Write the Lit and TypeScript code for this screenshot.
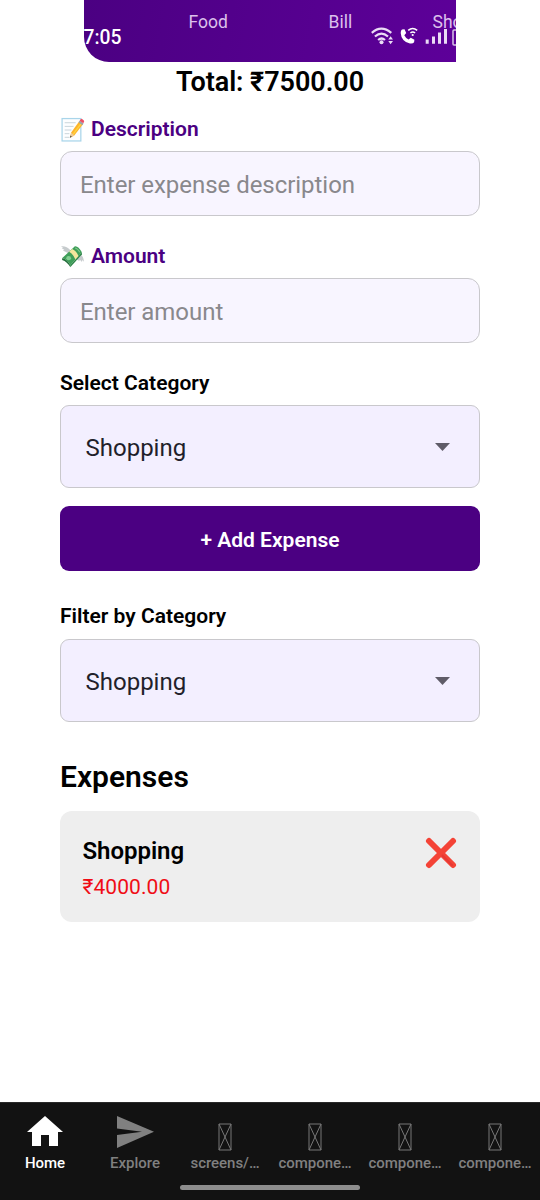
import { LitElement, html, css } from "lit";
import { customElement, property } from "lit/decorators.js";

const memoIcon = html`
  <svg class="emoji" viewBox="0 0 24 24">
    <rect x="2" y="1.500" width="18" height="21.500" fill="#fdfeff" stroke="#a9d5ea" stroke-width="1.200"/>
    <path d="M4.500 5.500h10.500M4.500 9h8.500M4.500 12.500h6.500M4.500 16h4.500M4.500 19.500h4.500" stroke="#c5d2d8" stroke-width=".9"/>
    <path d="M9.500 19.800l1.200-5L18.500 4l3.700 2.700-8.700 11.300z" fill="#fdb32b"/>
    <path d="M12 16.200L20.200 5.200l1.100.8-8.300 11z" fill="#ffd43f"/>
    <path d="M9.500 19.800l1.200-5 3 2.900z" fill="#efcb9a"/>
    <path d="M9.500 19.800l.5-2 1.400 1.100z" fill="#444"/>
    <path d="M17.700 5.100l1.200-1.600 3.700 2.700-1.200 1.700z" fill="#9aa5ad"/>
    <path d="M18.800 3.500l.9-1.200q.8-.9 1.800-.2l1.200.9q.9.900.3 1.800l-.7 1.300z" fill="#ef5065"/>
  </svg>`;

const moneyIcon = html`
  <svg class="emoji" viewBox="0 0 24 24">
    <path d="M10 6Q6 1.500 1 2.300l2.200 1.500-1.600.5 2.600 1.200-1.400.8L8.500 9zM16 12l3.500-1.800q3 1.500 3.500 6.800l-1.700-1.600-.2 2-2-2.300-.7 1.200L14.500 14z" fill="#c6cbcd"/>
    <path d="M2.200 13.500L14.300 2.200q3.300-.5 6.700 5.800L9.800 20.400Q7.200 15 2.200 13.500z" fill="#3f9f59"/>
    <path d="M2.200 13.500Q7.200 15 9.800 20.400v1.800Q7 17 2 15.300z" fill="#23703b"/>
    <path d="M9.800 20.400L21 8v2L9.800 22.200z" fill="#2c8446"/>
    <path d="M8.700 7.500l3-2.800q4.300 2 6 6.900l-2.900 3.200Q12.600 9.500 8.700 7.500z" fill="#f4e59c"/>
    <ellipse cx="8.300" cy="13.600" rx="2.300" ry="2" fill="#83cf91"/>
    <path d="M14.500 3.800q2.600.4 4.500 4.200" stroke="#7fc58b" fill="none"/>
  </svg>`;

const homeIcon = html`
  <svg class="home" viewBox="0 0 36 30"><path d="M18 0L0 16h5v14h9V19h8v11h9V16h5z" fill="#fff"/></svg>`;
const sendIcon = html`
  <svg class="send" viewBox="0 0 37 32"><path d="M0 0l37 15.800L0 32V19l25-3.200L0 12.500z" fill="#808080"/></svg>`;
const missingIcon = html`
  <svg class="missing" viewBox="0 0 14 28"><path d="M1 1h12v26H1zL13 27M13 1L1 27" fill="none" stroke="#777" stroke-width="1"/></svg>`;

@customElement("status-header")
class StatusHeader extends LitElement {
  static styles = css`
    :host { display: block; width: 372px; height: 62px; margin: 0 auto; }
    .bar {
      position: relative; height: 62px; overflow: hidden;
      border-bottom-left-radius: 25px;
      background: linear-gradient(100deg, #4b0082, #5d0099);
      color: #fff;
    }
    .axis { position: absolute; top: 11px; font-size: 17.5px; line-height: 22px; color: #dcc0ec; white-space: nowrap; }
    .food { left: 104.5px; }
    .bill { left: 244.5px; }
    .shop { left: 348.5px; }
    .clock { position: absolute; left: -0.5px; top: 26px; font-size: 19.3px; line-height: 24px; font-weight: 500; }
    .signals { position: absolute; left: 286px; top: 25px; width: 86px; height: 22px; }
  `;
  render() {
    return html`
      <div class="bar">
        <span class="axis food">Food</span>
        <span class="axis bill">Bill</span>
        <span class="axis shop">Sho</span>
        <span class="clock">7:05</span>
        <svg class="signals" viewBox="0 0 86 22">
          <g fill="none" stroke="#eadcf5" stroke-width="2.200">
            <path d="M1.800 7.800q9.500-8.300 19.500 0M4.900 11.500q6.600-5.800 13.100 0M8.100 15q3.500-3 6.900 0"/>
          </g>
          <circle cx="11.500" cy="17.300" r="2" fill="#eadcf5"/>
          <path d="M18.300 14.500l2.300-3.200 2.400 3.200zM18.300 16l2.300 3.200 2.400-3.200z" fill="#eadcf5"/>
          <path d="M32 4.500l2.500-.3 1.700 3.900-1.900 2.200q1.400 3 4.300 4.300l2.200-1.800 3.600 1.900-.3 2.500q-1.200 1.800-4.200 1.300Q31.300 16.500 30.700 8q0-2.800 1.300-3.500z" fill="#fff"/>
          <path d="M38.200 5.300q4.500-3.600 9 0M40.400 8q2.400-2 4.700 0" fill="none" stroke="#fff" stroke-width="1.500"/>
          <circle cx="42.700" cy="10" r="1.100" fill="#fff"/>
          <path d="M55.700 14.500h3v4.200h-3zM62 11.500h3v7.200h-3zM68 7.500h3v11.200h-3zM74 4h3v14.700h-3z" fill="#eadcf5"/>
          <path d="M86 5h-2q-1 0-1 1v13q0 1 1 1h2" fill="none" stroke="#d9c4e8" stroke-width="1.500"/>
        </svg>
      </div>`;
  }
}

@customElement("category-select")
class CategorySelect extends LitElement {
  @property() value = "";
  static styles = css`
    .box {
      box-sizing: border-box; height: 83px; padding: 2px 29px 0 24.5px;
      display: flex; align-items: center; justify-content: space-between;
      border: 1px solid #c9c8cc; border-radius: 9px; background: #f3efff;
      color: #221f2b; font-size: 24px;
    }
    :host { display: block; }
    .arrow { width: 15px; height: 8px; margin-top: -2px; }
  `;
  render() {
    return html`
      <div class="box">
        <span>${this.value}</span>
        <svg class="arrow" viewBox="0 0 15 8"><path d="M0 0h15L7.500 8z" fill="#5f5c68"/></svg>
      </div>`;
  }
}

@customElement("tab-bar")
class TabBar extends LitElement {
  static styles = css`
    :host { display: block; }
    .bar { position: relative; height: 98px; box-sizing: border-box; border-top: 1px solid #292929; background: #121212; }
    .tabs { display: grid; grid-template-columns: repeat(6, 90px); }
    .tab { display: flex; flex-direction: column; align-items: center; color: #808080; font-size: 15px; font-weight: 500; letter-spacing: -0.03px; }
    .active { color: #fff; }
    .icon { height: 50px; display: flex; align-items: flex-start; }
    .label { line-height: 20px; white-space: nowrap; }
    .home { width: 36px; height: 30px; margin-top: 13px; }
    .send { width: 37px; height: 32px; margin-top: 13px; }
    .missing { width: 14px; height: 28px; margin-top: 20px; }
    .handle { position: absolute; left: 180px; top: 82px; width: 180px; height: 5px; border-radius: 3px; background: #8d8d8d; }
  `;
  tabs = [
    { label: "Home", icon: homeIcon, active: true },
    { label: "Explore", icon: sendIcon },
    { label: "screens/…", icon: missingIcon },
    { label: "compone…", icon: missingIcon },
    { label: "compone…", icon: missingIcon },
    { label: "compone…", icon: missingIcon },
  ];
  render() {
    return html`
      <nav class="bar">
        <div class="tabs">
          ${this.tabs.map((t) => html`
            <div class="tab ${t.active ? "active" : ""}">
              <div class="icon">${t.icon}</div>
              <span class="label">${t.label}</span>
            </div>`)}
        </div>
        <div class="handle"></div>
      </nav>`;
  }
}

@customElement("app-root")
class AppRoot extends LitElement {
  static styles = css`
    :host {
      display: flex; flex-direction: column; height: 1200px; width: 540px;
      background: #fff; color: #000; overflow: hidden;
      font-family: Roboto, "Noto Sans", sans-serif;
    }
    .total { box-sizing: border-box; height: 38px; padding-top: 1px; text-align: center; font-size: 27px; font-weight: 600; line-height: 38px; letter-spacing: -0.05px; }
    .content { flex: 1; padding: 0 60px; }
    .label { display: flex; align-items: center; gap: 6px; height: 30px; font-size: 21px; font-weight: 600; }
    .accent { color: #4b0082; }
    .description { margin-top: 14px; }
    .emoji { width: 25px; height: 25px; }
    .field {
      box-sizing: border-box; height: 65px; margin: 7px 0 25px; padding: 2px 19px 0;
      display: flex; align-items: center;
      border: 1px solid #c9c8cc; border-radius: 12px; background: #f8f5ff;
      color: #89888c; font-size: 24px; letter-spacing: -0.04px;
    }
    .picker { margin-top: 7px; }
    .button {
      height: 65px; margin-top: 18px; border-radius: 9px; background: #4b0082; color: #fff;
      display: flex; align-items: center; justify-content: center;
      font-size: 21px; font-weight: 600; padding-top: 3px; box-sizing: border-box;
    }
    .filter { margin-top: 30px; }
    .filter-picker { margin-top: 8px; }
    .heading { margin: 35px 0 14px; font-size: 30px; line-height: 40px; font-weight: 600; }
    .card {
      box-sizing: border-box; height: 111px; padding: 22px 23px 22px 22.5px; border-radius: 12px; background: #eee;
      display: flex; justify-content: space-between;
    }
    .name { font-size: 24px; line-height: 36px; font-weight: 600; letter-spacing: -0.05px; }
    .price { font-size: 21px; line-height: 36px; letter-spacing: 0.08px; color: #f00d16; }
    .remove { width: 32px; height: 32px; margin-top: 4px; }
  `;
  render() {
    return html`
      <status-header></status-header>
      <div class="total">Total: ₹7500.00</div>
      <main class="content">
        <div class="label accent description">${memoIcon}<span>Description</span></div>
        <div class="field">Enter expense description</div>
        <div class="label accent">${moneyIcon}<span>Amount</span></div>
        <div class="field">Enter amount</div>
        <div class="label">Select Category</div>
        <category-select class="picker" value="Shopping"></category-select>
        <div class="button">+ Add Expense</div>
        <div class="label filter">Filter by Category</div>
        <category-select class="filter-picker" value="Shopping"></category-select>
        <div class="heading">Expenses</div>
        <div class="card">
          <div>
            <div class="name">Shopping</div>
            <div class="price">₹4000.00</div>
          </div>
          <svg class="remove" viewBox="0 0 32 32">
            <path d="M4 4l24 24M28 4L4 28" stroke="#f44336" stroke-width="6" stroke-linecap="round"/>
            <path d="M17.500 18.500L27 28" stroke="#e53935" stroke-width="2" stroke-linecap="round"/>
          </svg>
        </div>
      </main>
      <tab-bar></tab-bar>`;
  }
}
